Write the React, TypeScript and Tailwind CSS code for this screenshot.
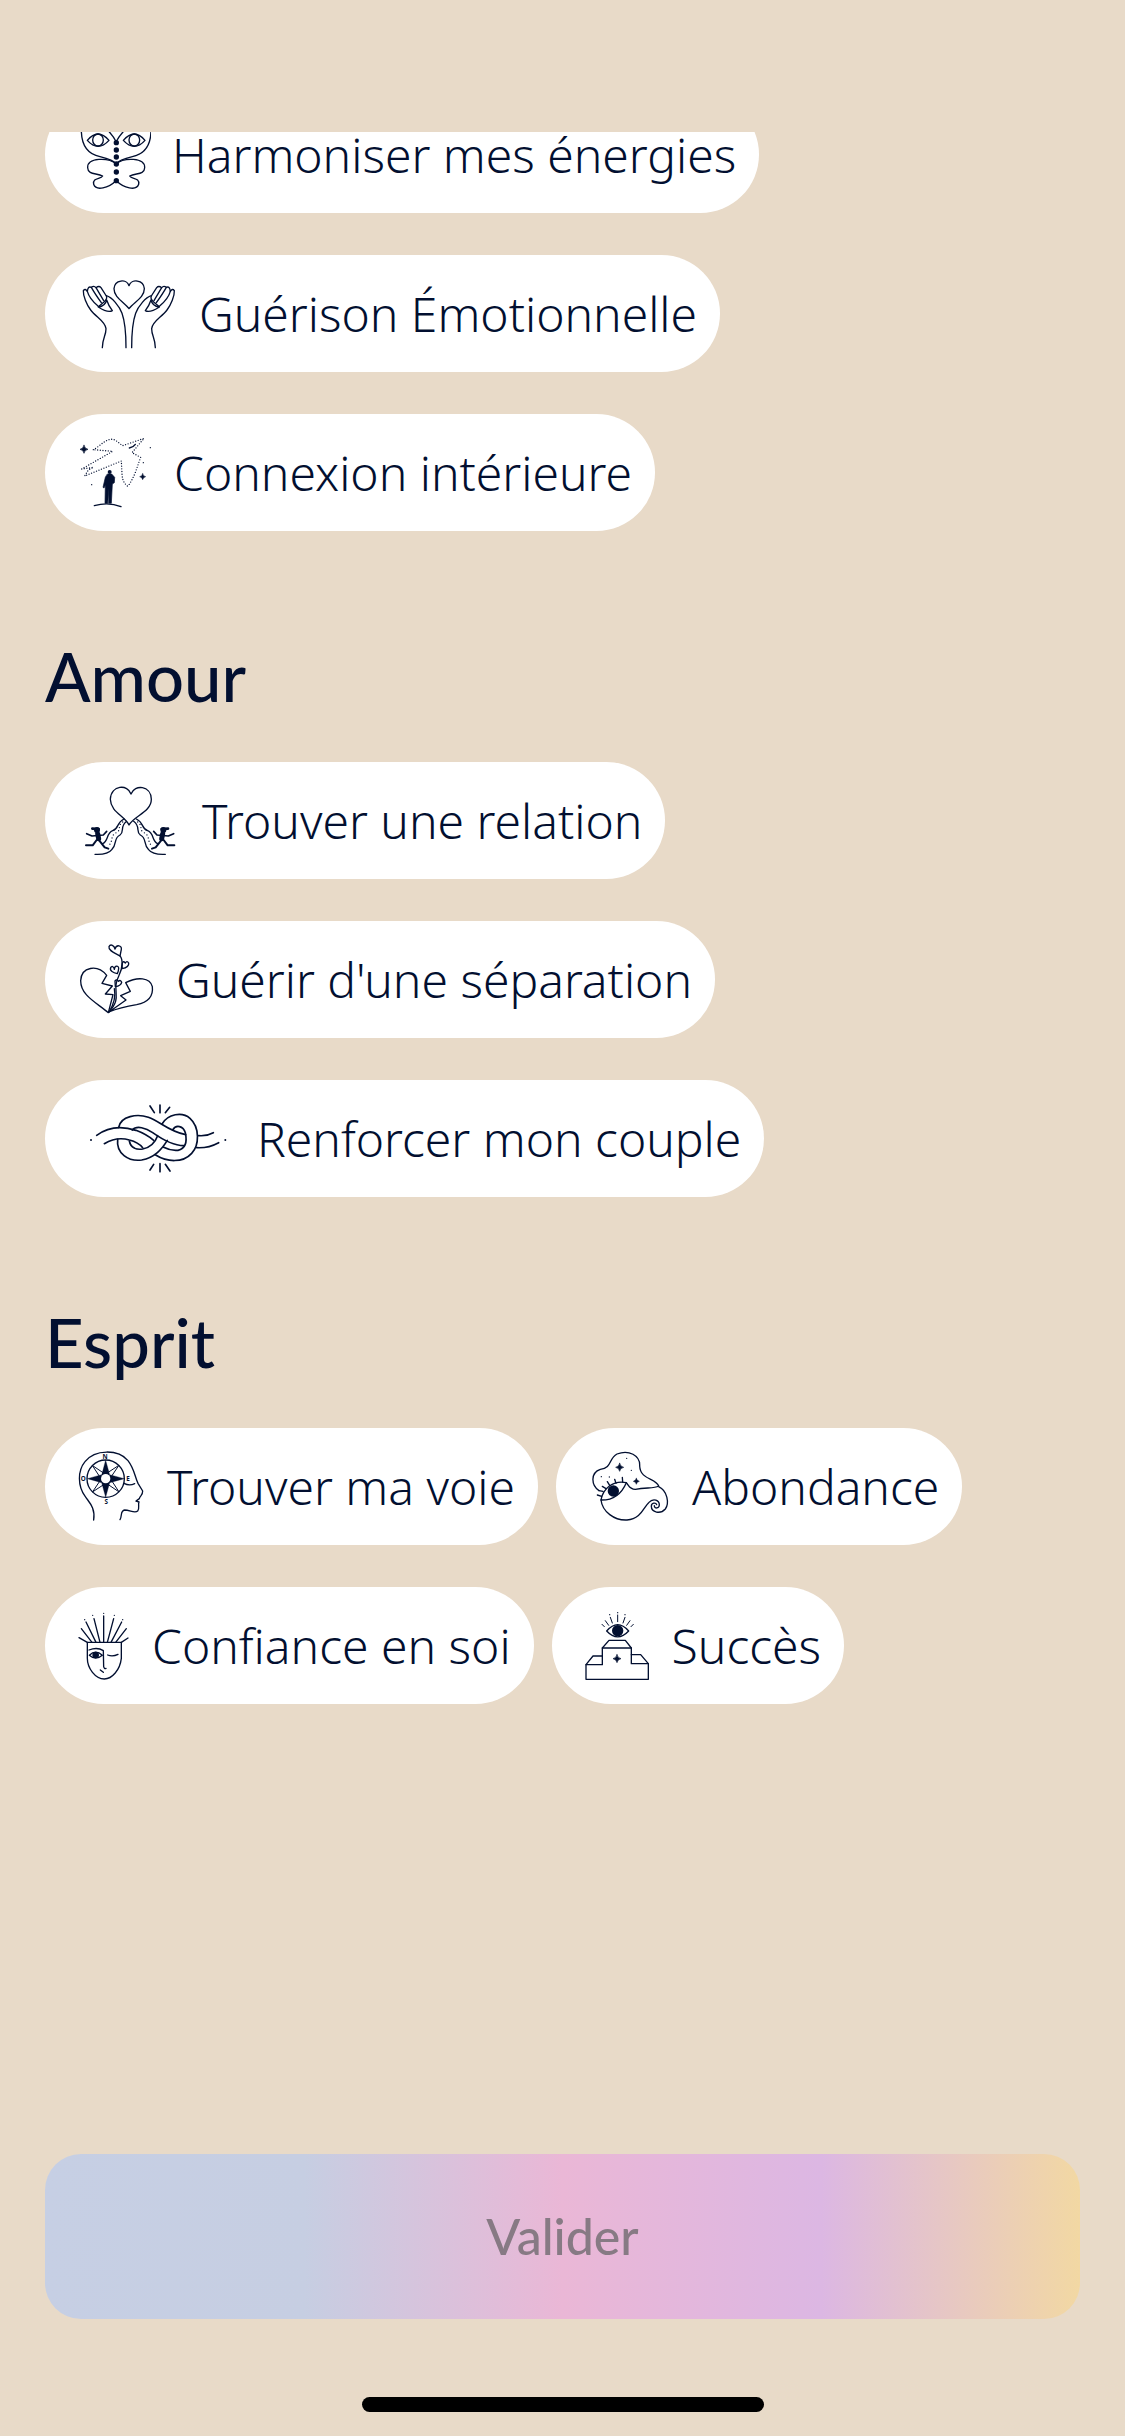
import { useState } from 'react';
import type { ReactNode } from 'react';

type Item = { label: string; icon: ReactNode };

type IconProps = { viewBox: string; className: string; children: ReactNode };

const Icon = ({ viewBox, className, children }: IconProps) => (
    <svg
        viewBox={viewBox}
        className={`h-[73px] shrink-0 ${className}`}
        fill="none"
        stroke="currentColor"
        strokeWidth={4}
        strokeLinecap="round"
        strokeLinejoin="round"
        aria-hidden="true"
    >
        {children}
    </svg>
);

const Sparkle = ({ x, y, r }: { x: number; y: number; r: number }) => (
    <path
        transform={`translate(${x} ${y}) scale(${r})`}
        d="M0-1Q.15-.15 1 0Q.15.15 0 1Q-.15.15-1 0Q-.15-.15 0-1Z"
        fill="currentColor"
        strokeWidth={0.16}
    />
);

const Dot = ({ x, y, r = 2 }: { x: number; y: number; r?: number }) => (
    <circle cx={x} cy={y} r={r} fill="currentColor" stroke="none" />
);

const ButterflyWing = () => (
    <>
        <path d="M124 30C124 78 146 103 180 110C205 116 222 122 229 132" />
        <path d="M124 30C124 12 140 4 160 6C185 10 212 34 229 66" />
        <path d="M142 61Q174 23 207 61Q174 97 142 61Z" />
        <ellipse cx="174" cy="60" rx="16" ry="18" />
        <path d="M229 132C205 112 142 112 143 143C144 166 170 158 188 168C182 178 157 172 161 193C168 214 206 204 228 182" />
    </>
);

const Butterfly = () => (
    <Icon viewBox="105 -6 228 219" className="w-[76px]">
        <ButterflyWing />
        <g transform="translate(457 0) scale(-1 1)">
            <ButterflyWing />
        </g>
        {[68, 90, 111, 132, 156, 182].map((y) => (
            <Dot key={y} x={229} y={y} r={8} />
        ))}
    </Icon>
);

const Hand = () => (
    <>
        <path d="M187 293C188 262 198 258 198 236C196 214 168 202 152 180C140 164 129 137 130 122Q136 114 142 124Q148 146 174 168" />
        <path d="M142 124Q144 107 154 112Q164 130 184 158" />
        <path d="M154 112Q162 106 168 113L191 152" />
        <path d="M168 113Q177 106 183 113L199 138Q203 146 192 156L175 170" />
        <path d="M175 171Q196 168 200 150Q205 166 217 182Q204 190 175 171Z" />
        <path d="M199 137C216 142 238 168 246 190C256 218 258 245 258 293" />
    </>
);

const HealingHands = () => (
    <Icon viewBox="105 81 309 219" className="w-[103px]">
        <path d="M267 176C252 156 222 143 222 116C224 88 260 86 267 107C274 86 311 88 313 116C313 143 282 156 267 176Z" />
        <Hand />
        <g transform="translate(533 0) scale(-1 1)">
            <Hand />
        </g>
    </Icon>
);

const InnerBird = () => (
    <Icon viewBox="105 78 234 219" className="w-[78px]">
        <path
            strokeDasharray="0 8"
            d="M160 119C180 110 204 76 228 92L248 107L312 85L276 128L302 142L285 190Q268 228 262 228Q246 215 246 190L244 153L134 198L145 180L160 172L125 177L218 124Z"
        />
        <path d="M268 114Q280 112 286 103" />
        <Sparkle x={132} y={118} r={12} />
        <Sparkle x={308} y={200} r={9} />
        <Dot x={331} y={113} />
        <Dot x={310} y={158} />
        <Dot x={155} y={224} />
        <Dot x={209} y={186} r={6} />
        <path
            fill="currentColor"
            strokeWidth={2}
            d="M203 192H215L224 202L223 218L217 222L214 280H206L207 236L203 280H195L196 226L192 234L189 232L196 202Z"
        />
        <path d="M163 287Q205 275 243 290" />
    </Icon>
);

const Runner = () => (
    <>
        <path strokeWidth={8} d="M157 206L176 207" />
        <Dot x={171} y={210} r={9} />
        <path strokeWidth={15} d="M173 221L176 236" />
        <path strokeWidth={5} d="M140 221L156 228L190 225L200 214" />
        <path strokeWidth={6} d="M170 240L158 256L138 256M178 242L194 262L205 266" />
        <path d="M252 177C228 188 238 206 218 212C198 220 206 243 188 251" />
        <path d="M260 184C238 200 255 214 240 225C220 234 232 252 216 268Q203 285 165 283" />
        <path strokeDasharray="0 10" d="M248 186C230 200 246 208 229 218C210 226 220 246 206 256" />
    </>
);

const HeartRunners = () => (
    <Icon viewBox="105 72 318 219" className="w-[106px]">
        <path d="M267 195C254 168 212 156 211 118C213 74 264 72 273 102C284 72 333 76 334 118C334 156 282 168 267 195Z" />
        <Runner />
        <g transform="translate(541 0) scale(-1 1)">
            <Runner />
        </g>
    </Icon>
);

const BrokenHeart = () => (
    <Icon viewBox="105 69 240 219" className="w-20">
        <path d="M205 278C170 248 122 227 122 182C124 140 172 132 200 166L186 190L217 198L196 222L219 224L205 278Z" />
        <path d="M207 276L258 240L242 227L271 214L257 188C292 170 330 172 337 200C341 234 320 248 290 254Q240 262 207 276Z" />
        <path d="M207 276C240 240 225 225 228 195C230 168 246 162 246 132Q247 115 240 108" />
        <path d="M207 276Q230 240 223 206" />
        <path d="M240 108C226 100 204 92 207 80C212 70 223 77 225 87C229 72 246 76 244 88Q242 98 240 108Z" />
        <path d="M232 161C220 158 208 152 212 143C216 136 222 141 223 148C224 135 236 136 236 145Q236 153 232 161Z" />
        <path d="M246 146L247 130Q249 121 256 129Q261 121 266 129Q268 142 246 146Z" />
        <path d="M226 200L225 183Q230 176 235 184Q242 178 245 187Q243 197 226 200Z" />
    </Icon>
);

const Knot = () => (
    <Icon viewBox="105 66 483 219" className="w-[161px]">
        <g strokeWidth={5}>
            <path d="M170 166C202 142 242 136 288 151Q318 162 341 181" />
            <path d="M193 191C220 175 245 173 268 180C288 185 300 193 308 203" />
            <path d="M236 142C242 108 292 100 325 112C360 124 388 156 437 164" />
            <path d="M277 150C290 135 318 144 338 158C372 182 400 197 431 197" />
            <path d="M366 132C384 102 426 94 450 115C480 142 478 196 455 220C428 250 380 246 347 225" />
            <path d="M398 150C408 132 430 138 436 158C442 186 436 206 414 211Q392 213 371 202" />
            <path d="M233 178C228 220 265 245 305 240C345 232 365 208 382 181" />
            <path d="M268 183C272 204 290 210 308 207C332 202 346 186 353 167" />
            <path d="M476 167Q500 169 520 158M470 203Q505 205 536 188" />
            <path d="M330 78L343 98M360 75V98M389 82L376 98M341 253L330 270M360 251V275M376 253L390 273" />
        </g>
        <Dot x={153} y={180} r={3} />
        <Dot x={556} y={180} r={3} />
    </Icon>
);

const CompassHead = () => (
    <Icon viewBox="105 90 213 219" className="w-[71px]">
        <path d="M161 300C166 264 150 250 136 230C112 198 113 152 135 125C165 86 236 88 264 122C284 148 284 170 294 190L308 213C308 228 300 226 298 236L288 243L297 246C293 256 300 264 293 273C284 281 270 270 254 270C240 272 247 288 240 299" />
        <path d="M252 190Q268 199 284 191" />
        <circle cx="197" cy="176" r="56" />
        <path strokeWidth={3} d="M158 137L192 160L181 171ZM236 137L213 171L202 160ZM236 215L202 192L213 181ZM158 215L181 181L192 192Z" />
        <path
            fill="currentColor"
            strokeWidth={1}
            d="M197 121L209 164L253 176L209 188L197 232L185 188L142 176L185 164Z"
        />
        <circle cx="197" cy="176" r="14" className="fill-white" stroke="none" />
        <g fill="currentColor" stroke="none" fontSize="19" fontWeight="700" textAnchor="middle">
            <text x="195" y="117">N</text>
            <text x="199" y="252">S</text>
            <text x="264" y="182">E</text>
            <text x="130" y="183">O</text>
        </g>
    </Icon>
);

const DreamEye = () => (
    <Icon viewBox="117 90 255 219" className="w-[85px]">
        <path d="M156 212C132 196 130 158 160 148C196 144 184 116 210 102C245 88 280 106 278 138C280 180 326 174 335 198C322 206 300 202 265 208C246 207 246 196 238 188" />
        <path d="M162 240C168 206 198 180 238 188C226 216 204 241 162 240Z" />
        <Dot x={199} y={213} r={17} />
        <path d="M151 225L164 229M156 212L168 214M166 199L177 206M181 185L188 196M203 178L207 190M226 172L227 186" />
        <path d="M162 240C166 275 202 302 240 300C282 297 290 262 305 248C320 232 337 242 337 255C336 267 322 266 322 257" />
        <path d="M335 200C362 213 367 250 355 267C340 284 313 277 313 259C313 247 327 247 329 254" />
        <Sparkle x={218} y={142} r={12} />
        <Sparkle x={268} y={184} r={9} />
        <Dot x={239} y={115} />
        <Dot x={253} y={151} />
        <Dot x={187} y={171} />
        <Dot x={163} y={170} />
    </Icon>
);

const CrownFace = () => (
    <Icon viewBox="105 87 168 219" className="w-14">
        <path d="M142 187H244V235C240 270 216 297 193 297C166 297 142 265 142 235Z" />
        <path d="M191 187V108M180 187L162 116M202 187L221 116M168 187L138 126M213 187L245 126M156 187L124 146M227 187L259 146M142 187L117 173M244 187L264 174" />
        <path d="M147 210Q172 200 190 212L191 260Q193 268 198 265" />
        <path d="M148 226Q167 207 187 226Q167 243 148 226Z" />
        <path d="M203 225Q218 231 234 223M181 270L190 277" />
        <Dot x={167} y={225} r={10} />
        <Dot x={191} y={100} />
        <Dot x={158} y={106} />
        <Dot x={223} y={106} />
        <Dot x={134} y={119} />
        <Dot x={248} y={119} />
    </Icon>
);

const Podium = () => (
    <Icon viewBox="100 87 207 219" className="w-[69px]">
        <path d="M112 298V254H161V204H248V251H299V298Z" />
        <path d="M161 204L181 181H230L248 204M112 254L133 228H160M248 224H276L299 251" />
        <path d="M174 153Q207 115 240 153Q207 188 174 153Z" />
        <path strokeWidth={3} d="M207 105V125M185 112L191 129M229 112L223 129M170 122L180 136M244 122L234 136M160 133L167 140M254 133L247 140" />
        <Dot x={207} y={152} r={17} />
        <Dot x={207} y={98} />
        <Dot x={183} y={104} />
        <Dot x={229} y={104} />
        <Sparkle x={205} y={236} r={12} />
    </Icon>
);

const bienEtre: Item[] = [
    { label: 'Harmoniser mes énergies', icon: <Butterfly /> },
    { label: 'Guérison Émotionnelle', icon: <HealingHands /> },
    { label: 'Connexion intérieure', icon: <InnerBird /> },
];

const amour: Item[] = [
    { label: 'Trouver une relation', icon: <HeartRunners /> },
    { label: "Guérir d'une séparation", icon: <BrokenHeart /> },
    { label: 'Renforcer mon couple', icon: <Knot /> },
];

const esprit: Item[] = [
    { label: 'Trouver ma voie', icon: <CompassHead /> },
    { label: 'Abondance', icon: <DreamEye /> },
    { label: 'Confiance en soi', icon: <CrownFace /> },
    { label: 'Succès', icon: <Podium /> },
];

type ChipListProps = {
    items: Item[];
    row?: boolean;
    selected: string[];
    onToggle: (label: string) => void;
};

const ChipList = ({ items, row, selected, onToggle }: ChipListProps) => (
    <div className={row ? 'flex flex-wrap gap-x-[18px] gap-y-[42px]' : 'flex flex-col items-start gap-[42px]'}>
        {items.map(({ label, icon }) => (
            <button
                key={label}
                type="button"
                aria-pressed={selected.includes(label)}
                onClick={() => onToggle(label)}
                className="flex h-[117px] items-center gap-[21px] rounded-full bg-white pl-[30px] pr-[23px] text-[48px] font-light whitespace-nowrap aria-pressed:ring-4 aria-pressed:ring-[#deb8e2]"
            >
                {icon}
                <span>{label}</span>
            </button>
        ))}
    </div>
);

const Title = ({ children }: { children: ReactNode }) => (
    <h2 className="pt-[105px] pb-[46px] font-['Lato',sans-serif] text-[67px] leading-[80px] font-medium">{children}</h2>
);

const App = () => {
    const [selected, setSelected] = useState<string[]>([]);

    const toggle = (label: string) =>
        setSelected((prev) => (prev.includes(label) ? prev.filter((l) => l !== label) : [...prev, label]));

    return (
        <div className="flex min-h-screen flex-col bg-[#e8dac8] pt-[132px] font-['Noto_Sans',sans-serif] text-[#020f30]">
            <main className="flex-1 overflow-hidden px-[45px]">
                {/* la liste est déjà un peu défilée */}
                <div className="-mt-9">
                    <ChipList items={bienEtre} selected={selected} onToggle={toggle} />

                    <Title>Amour</Title>
                    <ChipList items={amour} selected={selected} onToggle={toggle} />

                    <Title>Esprit</Title>
                    <ChipList items={esprit} row selected={selected} onToggle={toggle} />
                </div>
            </main>

            <footer className="flex flex-col items-center px-[45px] pb-6">
                <button
                    type="button"
                    disabled={selected.length === 0}
                    className="h-[165px] w-full rounded-[36px] bg-[linear-gradient(90deg,#c6cfe4_0%,#c6cee2_25%,#eab7d6_50%,#dcb7e3_75%,#f2d8a3_100%)] font-['Lato',sans-serif] text-[50px] font-medium text-[#020f30] disabled:text-[#877a84]"
                >
                    Valider
                </button>
                <div className="mt-[78px] h-[15px] w-[402px] rounded-full bg-black" />
            </footer>
        </div>
    );
};

export default App;
